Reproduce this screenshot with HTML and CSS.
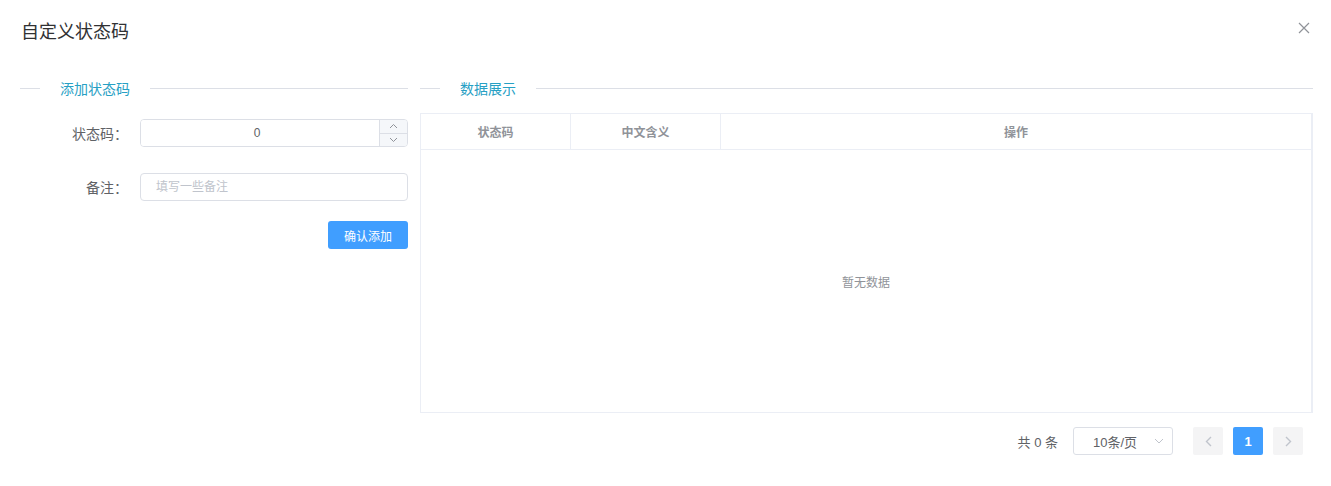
FILE: index.html
```html
<!DOCTYPE html>
<html>

<head>
    <link rel="stylesheet" href="styles.css">
</head>

<body>
    <div class="dialog">
        <div class="dialog-header">
            <span class="dialog-title">自定义状态码</span>
            <button class="dialog-close" type="button">
                <svg width="12" height="12" viewBox="0 0 12 12">
                    <path d="M1 1 L11 11 M11 1 L1 11" stroke="#909399" stroke-width="1.2" fill="none" />
                </svg>
            </button>
        </div>

        <div class="dialog-body">
            <!-- left: add form -->
            <div class="col-left">
                <div class="divider">
                    <span class="divider-lead"></span>
                    <span class="divider-text">添加状态码</span>
                    <span class="divider-line"></span>
                </div>

                <form class="form">
                    <div class="form-item">
                        <label class="form-label">状态码：</label>
                        <div class="input-number">
                            <input type="text" value="0">
                            <div class="controls">
                                <span class="ctrl ctrl-up">
                                    <svg width="9" height="6" viewBox="0 0 9 6">
                                        <path d="M1 5 L4.5 1.5 L8 5" stroke="#909399" stroke-width="1" fill="none" />
                                    </svg>
                                </span>
                                <span class="ctrl">
                                    <svg width="9" height="6" viewBox="0 0 9 6">
                                        <path d="M1 1 L4.5 4.5 L8 1" stroke="#909399" stroke-width="1" fill="none" />
                                    </svg>
                                </span>
                            </div>
                        </div>
                    </div>

                    <div class="form-item">
                        <label class="form-label">备注：</label>
                        <input class="input" type="text" placeholder="填写一些备注">
                    </div>

                    <div class="form-actions">
                        <button class="btn-primary" type="button">确认添加</button>
                    </div>
                </form>
            </div>

            <!-- right: data table -->
            <div class="col-right">
                <div class="divider">
                    <span class="divider-lead"></span>
                    <span class="divider-text">数据展示</span>
                    <span class="divider-line"></span>
                </div>

                <div class="table">
                    <div class="table-head">
                        <div class="th th-code">状态码</div>
                        <div class="th th-name">中文含义</div>
                        <div class="th th-op">操作</div>
                    </div>
                    <div class="table-empty">暂无数据</div>
                </div>

                <div class="pagination">
                    <span class="total">共 0 条</span>
                    <div class="sizes">
                        <span>10条/页</span>
                        <svg width="10" height="6" viewBox="0 0 10 6">
                            <path d="M1 1 L5 5 L9 1" stroke="#c0c4cc" stroke-width="1" fill="none" />
                        </svg>
                    </div>
                    <button class="pg-btn" type="button">
                        <svg width="7" height="11" viewBox="0 0 7 11">
                            <path d="M6 1 L1.5 5.5 L6 10" stroke="#c0c4cc" stroke-width="1.4" fill="none" />
                        </svg>
                    </button>
                    <button class="pg-btn pg-active" type="button">1</button>
                    <button class="pg-btn" type="button">
                        <svg width="7" height="11" viewBox="0 0 7 11">
                            <path d="M1 1 L5.5 5.5 L1 10" stroke="#c0c4cc" stroke-width="1.4" fill="none" />
                        </svg>
                    </button>
                </div>
            </div>
        </div>
    </div>
</body>

</html>
```

FILE: styles.css
```css
body {
    font-family: "Liberation Sans", "Noto Sans CJK SC", sans-serif;
    background-color: #fff;
    color: #606266;
    margin: 0;
}

.dialog {
    background-color: #fff;
}

.dialog-header {
    display: flex;
    justify-content: space-between;
    align-items: center;
    padding: 20px 20px 10px 21px;
}

.dialog-title {
    font-size: 18px;
    line-height: 24px;
    color: #303133;
}

.dialog-close {
    border: none;
    background: none;
    padding: 0;
    margin-right: 1px;
    margin-top: -8px;
    display: flex;
}

.dialog-body {
    display: flex;
    gap: 12px;
    padding: 24px 18px 0 20px;
}

.col-left {
    width: 388px;
    flex-shrink: 0;
}

.col-right {
    flex: 1;
}

/* section dividers */
.divider {
    display: flex;
    align-items: center;
    height: 20px;
}

.divider-lead {
    width: 20px;
    border-top: 1px solid #dcdfe6;
}

.divider-line {
    flex: 1;
    border-top: 1px solid #dcdfe6;
}

.divider-text {
    padding: 0 20px;
    font-size: 14px;
    color: #27a0c4;
}

/* form */
.form {
    margin-top: 21px;
}

.form-item {
    display: flex;
    align-items: center;
    margin-bottom: 26px;
}

.form-label {
    width: 120px;
    padding-right: 12px;
    box-sizing: border-box;
    text-align: right;
    font-size: 14px;
    color: #606266;
}

.input,
.input-number {
    flex: 1;
    height: 28px;
    border: 1px solid #dcdfe6;
    border-radius: 4px;
    box-sizing: border-box;
}

.input {
    padding: 0 15px;
    font-family: inherit;
    font-size: 12px;
    color: #606266;
    outline: none;
}

.input::placeholder {
    color: #c0c4cc;
}

.input-number {
    display: flex;
    overflow: hidden;
}

.input-number input {
    flex: 1;
    min-width: 0;
    border: none;
    outline: none;
    text-align: center;
    font-family: inherit;
    font-size: 12px;
    color: #606266;
    padding: 0 6px 0 0;
}

.controls {
    width: 27px;
    display: flex;
    flex-direction: column;
    border-left: 1px solid #dcdfe6;
    background-color: #f5f7fa;
}

.ctrl {
    flex: 1;
    display: flex;
    align-items: center;
    justify-content: center;
}

.ctrl-up {
    border-bottom: 1px solid #dcdfe6;
}

.form-actions {
    display: flex;
    justify-content: flex-end;
    margin-top: -6px;
}

.btn-primary {
    width: 80px;
    height: 28px;
    border: none;
    border-radius: 3px;
    background-color: #409eff;
    color: #fff;
    font-family: inherit;
    font-size: 12px;
}

/* table */
.table {
    margin-top: 15px;
    border: 1px solid #ebeef5;
    border-right-width: 2px;
}

.table-head {
    display: flex;
    height: 35px;
    border-bottom: 1px solid #ebeef5;
}

.th {
    display: flex;
    align-items: center;
    justify-content: center;
    box-sizing: border-box;
    font-size: 12px;
    font-weight: bold;
    color: #909399;
    border-right: 1px solid #ebeef5;
}

.th-code,
.th-name {
    width: 150px;
}

.th-op {
    flex: 1;
    border-right: none;
}

.table-empty {
    height: 262px;
    display: flex;
    align-items: center;
    justify-content: center;
    font-size: 12px;
    color: #909399;
}

/* pagination */
.pagination {
    display: flex;
    justify-content: flex-end;
    align-items: center;
    margin-top: 14px;
    padding-right: 10px;
}

.total {
    font-size: 13px;
    color: #606266;
    margin-right: 15px;
}

.sizes {
    width: 100px;
    height: 28px;
    box-sizing: border-box;
    border: 1px solid #dcdfe6;
    border-radius: 3px;
    display: flex;
    align-items: center;
    justify-content: space-between;
    padding: 0 8px 0 19px;
    font-size: 13px;
    color: #606266;
    margin-right: 20px;
}

.pg-btn {
    width: 30px;
    height: 28px;
    border: none;
    border-radius: 2px;
    background-color: #f4f4f5;
    display: flex;
    align-items: center;
    justify-content: center;
    padding: 0;
    margin-left: 10px;
    font-family: inherit;
    font-size: 13px;
    font-weight: bold;
    color: #606266;
}

.pg-btn:first-of-type {
    margin-left: 0;
}

.pg-active {
    background-color: #409eff;
    color: #fff;
}
```
